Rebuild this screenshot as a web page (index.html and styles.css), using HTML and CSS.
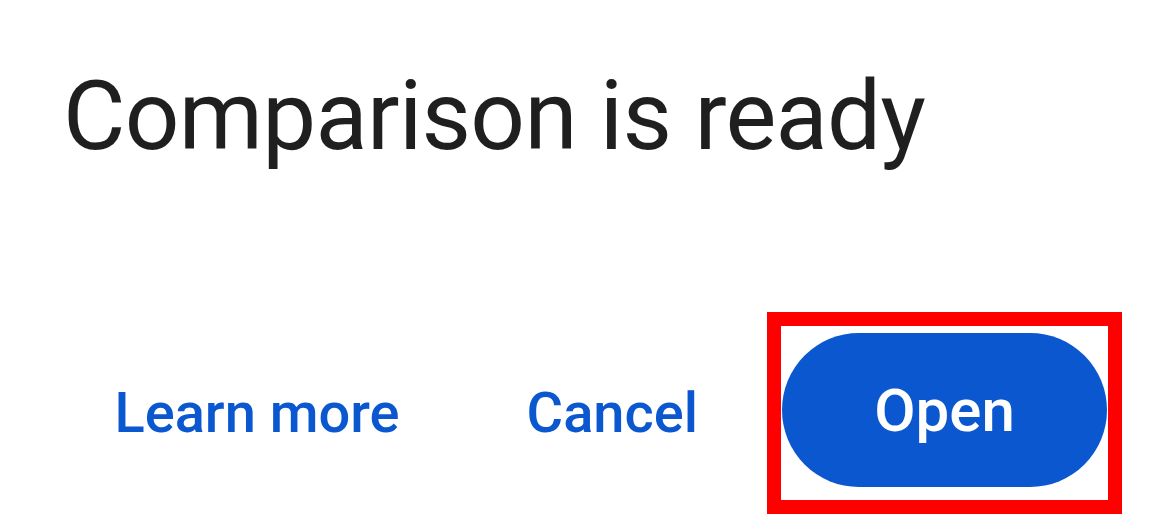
FILE: index.html
```html
<!DOCTYPE html>
<html lang="en">
<head>
    <meta charset="UTF-8">
    <meta name="viewport" content="width=device-width, initial-scale=1.0">
    <title>Comparison is ready</title>
    <link rel="stylesheet" href="styles.css">
</head>
<body>
    <div class="dialog">
        <h1 class="dialog-title">Comparison is ready</h1>

        <div class="dialog-actions">
            <button class="text-btn learn-btn">Learn more</button>
            <button class="text-btn cancel-btn">Cancel</button>
            <div class="highlight">
                <button class="filled-btn">Open</button>
            </div>
        </div>
    </div>
</body>
</html>
```

FILE: styles.css
```css
body {
    font-family: 'Roboto', 'Liberation Sans', sans-serif;
    background-color: #ffffff;
    margin: 0;
    overflow: hidden;
    color: #1f1f1f;
}

.dialog {
    padding: 56px 50px 0 63px;
}

.dialog-title {
    font-size: 96px;
    font-weight: 400;
    letter-spacing: -0.7px;
    line-height: 120px;
    margin: 0;
    color: #1f1f1f;
}

.dialog-actions {
    display: flex;
    justify-content: flex-end;
    align-items: center;
    margin-top: 136px;
}

.text-btn {
    font-family: inherit;
    font-size: 56px;
    font-weight: 500;
    color: #0b57d0;
    background: none;
    border: none;
    padding: 0;
    cursor: pointer;
}

.learn-btn {
    margin-right: 127px;
}

.cancel-btn {
    margin-right: 69px;
}

/* red marker round the main action */
.highlight {
    border: 14px solid #ff0000;
    padding: 7px 1px 13px 1px;
    background-color: #ffffff;
}

.filled-btn {
    display: block;
    width: 325px;
    height: 154px;
    font-family: inherit;
    font-size: 60px;
    font-weight: 500;
    color: #ffffff;
    background-color: #0b57d0;
    border: none;
    border-radius: 77px;
    cursor: pointer;
}
```
